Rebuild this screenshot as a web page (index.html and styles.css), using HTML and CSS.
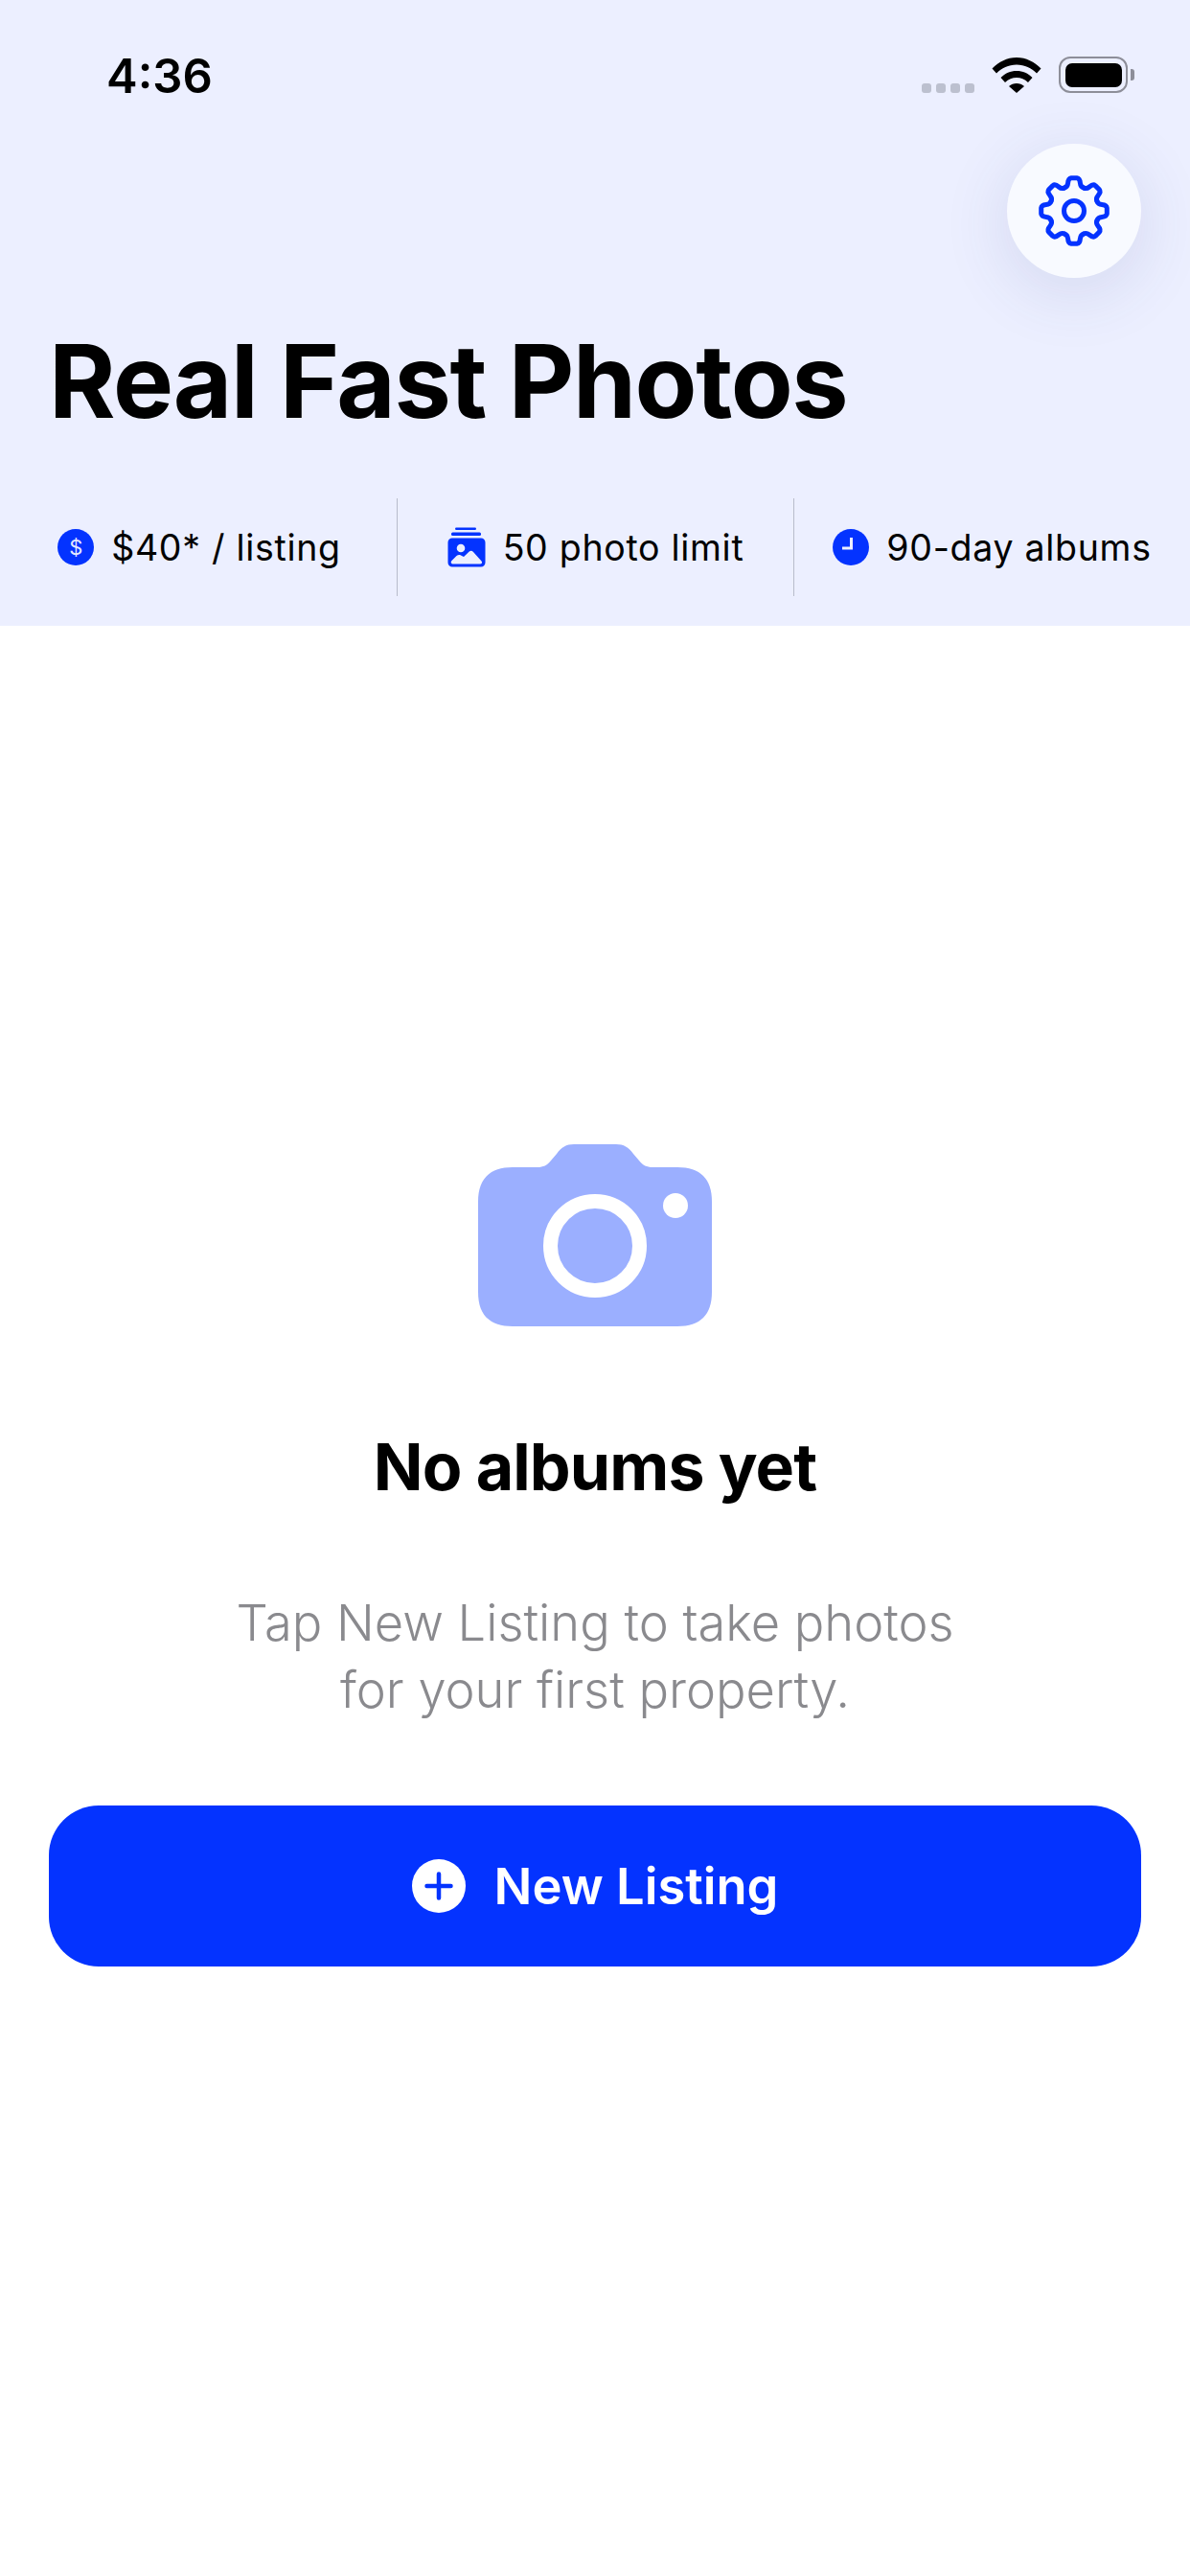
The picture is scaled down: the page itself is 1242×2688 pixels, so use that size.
FILE: index.html
```html
<!DOCTYPE html>
<html>
	<head>
		<meta charset="utf-8">
		<meta name="viewport" content="width=device-width, initial-scale=1">
		<title>Real Fast Photos</title>
		<link rel="stylesheet" href="styles.css">
	</head>
	<body>
		<header class="top">
			<div class="status">
				<span class="time">4:36</span>
				<div class="status-icons">
					<div class="signal"><i></i><i></i><i></i><i></i></div>
					<svg class="wifi" viewBox="0 0 52 38" width="52" height="38">
						<path d="M0.5 12.500C7.500 5.500 16 1 26 1S44.500 5.500 51.500 12.500L47 17.500C41.500 12 34.500 8.500 26 8.500S10.500 12 5 17.500Z" />
						<path d="M9.500 22C14 17.500 19.500 15 26 15S38 17.500 42.500 22L38 27C34.500 23.800 30.500 22 26 22S17.500 23.800 14 27Z" />
						<path d="M18 31C20.200 29 23 28 26 28S31.800 29 34 31L26 38Z" />
					</svg>
					<div class="battery"><div class="battery-fill"></div></div>
					<div class="battery-cap"></div>
				</div>
			</div>
			<div class="settings-row">
				<button class="settings">
					<svg class="gear" viewBox="0 0 76 76" width="76" height="76">
						<defs>
							<path id="tooth" d="M28.050 13.980Q31.270 12.890 31.600 9Q32.010 4.020 35 3.700H41Q43.990 4.020 44.400 9Q44.730 12.890 47.950 13.980" />
						</defs>
						<use href="#tooth" />
						<use href="#tooth" transform="rotate(45 38 38)" />
						<use href="#tooth" transform="rotate(90 38 38)" />
						<use href="#tooth" transform="rotate(135 38 38)" />
						<use href="#tooth" transform="rotate(180 38 38)" />
						<use href="#tooth" transform="rotate(225 38 38)" />
						<use href="#tooth" transform="rotate(270 38 38)" />
						<use href="#tooth" transform="rotate(315 38 38)" />
						<circle cx="38" cy="38" r="10.500" />
					</svg>
				</button>
			</div>
			<h1>Real Fast Photos</h1>
			<div class="stats">
				<div class="stat">
					<span class="dot">$</span>
					<span>$40* / listing</span>
				</div>
				<div class="stat">
					<svg class="stack" viewBox="0 0 40 42" width="40" height="42">
						<rect x="8" y="0.500" width="22" height="2.500" rx="1.200" />
						<rect x="4" y="5.500" width="31" height="3.500" rx="1.500" />
						<path fill-rule="evenodd" d="M5 11.500H35A4.500 4.500 0 0 1 39.500 16V37A4.500 4.500 0 0 1 35 41.500H5A4.500 4.500 0 0 1 0.500 37V16A4.500 4.500 0 0 1 5 11.500ZM14 17.700A4.300 4.300 0 1 0 14 26.300A4.300 4.300 0 1 0 14 17.700ZM6 38.500H34C36 38.500 36.700 37 35.500 35.500L27 26C25.500 24.300 24 24.300 22.500 25.700L17 31L14 29.500C12.500 28.800 11 29 9.500 30L4.500 35C3 36.500 3.800 38.500 6 38.500Z" />
					</svg>
					<span>50 photo limit</span>
				</div>
				<div class="stat">
					<svg class="clock" viewBox="0 0 38 38" width="38" height="38">
						<circle cx="19" cy="19" r="19" />
						<path d="M19.500 9V20H10" />
					</svg>
					<span>90-day albums</span>
				</div>
			</div>
		</header>
		<main class="empty">
			<svg class="camera" viewBox="0 0 244 190" width="244" height="190">
				<path d="M36 24H62C68 24 72 22 76 17L82 10C87 3 92 0 100 0H144C152 0 157 3 162 10L168 17C172 22 176 24 182 24H208C232 24 244 36 244 60V154C244 178 232 190 208 190H36C12 190 0 178 0 154V60C0 36 12 24 36 24Z" fill="#9bafff" />
				<circle cx="122" cy="106" r="46.500" fill="none" stroke="#fff" stroke-width="15" />
				<circle cx="206" cy="64" r="13" fill="#fff" />
			</svg>
			<h2>No albums yet</h2>
			<p>Tap New Listing to take photos<br>for your first property.</p>
			<button class="new-listing">
				<svg viewBox="0 0 56 56" width="56" height="56">
					<circle cx="28" cy="28" r="28" fill="#fff" />
					<path d="M28 15.500V40.500M15.500 28H40.500" stroke="#0433ff" stroke-width="4.500" stroke-linecap="round" />
				</svg>
				<span>New Listing</span>
			</button>
		</main>
	</body>
</html>
```

FILE: styles.css
```css
* {
	box-sizing: border-box;
}

body {
	margin: 0;
	background: #fff;
	color: #000;
	font-family: Inter, "Liberation Sans", sans-serif;
}

.top {
	height: 653px;
	background: #ecefff;
	overflow: hidden;
}

.status {
	height: 150px;
	padding: 57px 58px 0 111px;
	display: flex;
	justify-content: space-between;
	align-items: flex-start;
}

.time {
	font-size: 49px;
	line-height: 46px;
	font-weight: 600;
}

.status-icons {
	display: flex;
	align-items: flex-end;
	height: 40px;
}

.signal {
	display: flex;
	gap: 5px;
	margin-right: 18px;
	margin-bottom: 0;
}

.signal i {
	width: 10px;
	height: 10px;
	border-radius: 3px;
	background: #bcc0cf;
}

.wifi {
	fill: #000;
	margin-right: 18px;
}

.battery {
	width: 72px;
	height: 38px;
	padding: 4.500px;
	border: 2.500px solid #8d8e99;
	border-radius: 12px;
}

.battery-fill {
	height: 100%;
	background: #000;
	border-radius: 7px;
}

.battery-cap {
	width: 4px;
	height: 12px;
	margin: 0 0 13px 3px;
	background: #8d8e99;
	border-radius: 0 3px 3px 0;
}

.settings-row {
	display: flex;
	justify-content: flex-end;
	padding-right: 51px;
}

.settings {
	width: 140px;
	height: 140px;
	padding: 0;
	border: 0;
	border-radius: 50%;
	background: #f8faff;
	display: flex;
	align-items: center;
	justify-content: center;
	box-shadow: 0 14px 70px rgba(60, 70, 140, 0.14);
}

.gear {
	fill: none;
	stroke: #0433ff;
	stroke-width: 5;
	stroke-linecap: round;
	stroke-linejoin: round;
}

h1 {
	margin: 49px 0 0;
	padding-left: 51px;
	font-size: 106px;
	line-height: 118px;
	font-weight: 700;
	letter-spacing: -1.350px;
}

.stats {
	margin-top: 63px;
	display: flex;
}

.stat {
	width: 414px;
	height: 102px;
	display: flex;
	align-items: center;
	justify-content: center;
	gap: 18px;
	font-size: 37.500px;
	letter-spacing: 0.700px;
	border-left: 1.500px solid #b8bccb;
}

.stat:first-child {
	border-left: 0;
	padding-left: 2px;
}

.dot {
	width: 38px;
	height: 38px;
	border-radius: 50%;
	background: #0433ff;
	color: #e4e9ff;
	font-size: 22px;
	letter-spacing: 0;
	display: flex;
	align-items: center;
	justify-content: center;
}

.stack {
	fill: #0433ff;
}

.clock circle {
	fill: #0433ff;
}

.clock path {
	fill: none;
	stroke: #ecefff;
	stroke-width: 3;
}

.empty {
	padding: 541px 51px 0;
	display: flex;
	flex-direction: column;
	align-items: center;
}

h2 {
	margin: 108px 0 0;
	font-size: 68px;
	line-height: 76px;
	font-weight: 700;
	letter-spacing: -0.900px;
}

p {
	margin: 90px 0 0;
	font-size: 52.400px;
	line-height: 70px;
	font-weight: 300;
	color: #8a8a8e;
	text-align: center;
}

.new-listing {
	width: 100%;
	height: 168px;
	margin-top: 86px;
	border: 0;
	border-radius: 52px;
	background: #0433ff;
	color: #fff;
	font-family: inherit;
	font-size: 52.500px;
	font-weight: 600;
	display: flex;
	align-items: center;
	justify-content: center;
	gap: 30px;
}
```
